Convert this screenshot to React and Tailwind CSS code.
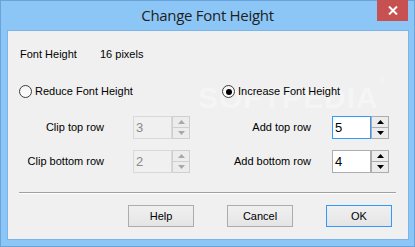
import React from "react";

function Arrow({ up, disabled }) {
  return (
    <svg width="7" height="4" viewBox="0 0 7 4" className="block">
      <path
        d={up ? "M0 4 L3.5 0 L7 4 Z" : "M0 0 L3.5 4 L7 0 Z"}
        fill={disabled ? "#a8a8a8" : "#000"}
      />
    </svg>
  );
}

function Spin({ value, disabled, focused }) {
  const boxBorder = focused
    ? "border-[#3399ff]"
    : disabled
    ? "border-[#d9d9d9]"
    : "border-[#abadb3]";
  const boxFill = disabled ? "bg-[#f0f0f0] text-[#8a8a8a]" : "bg-white text-black";
  const spinBorder = disabled ? "border-[#cfcfcf]" : "border-[#acacac]";

  return (
    <div className="flex h-[23px] w-[57px]">
      <div className={`flex flex-1 items-center border pl-[2px] text-[13px] ${boxBorder} ${boxFill}`}>
        {value}
      </div>
      <div className={`flex w-[18px] flex-col border ${spinBorder} bg-[#f0f0f0]`}>
        <div className={`flex flex-1 items-center justify-center border-b ${spinBorder} bg-[#ececec]`}>
          <Arrow up disabled={disabled} />
        </div>
        <div className="flex flex-1 items-center justify-center bg-[#ececec]">
          <Arrow disabled={disabled} />
        </div>
      </div>
    </div>
  );
}

function Radio({ checked, label }) {
  return (
    <div className="flex h-[13px] items-center">
      <span className="flex h-[13px] w-[13px] items-center justify-center rounded-full border border-[#3c3c3c] bg-gradient-to-b from-[#f4f4f4] to-white">
        {checked && <span className="h-[6px] w-[6px] rounded-full bg-black" />}
      </span>
      <span className="ml-[3px]">{label}</span>
    </div>
  );
}

function Row({ label, labelWidth, gap, children }) {
  return (
    <div className="flex h-[23px] items-center">
      <div className={`text-right ${labelWidth} ${gap}`}>{label}</div>
      {children}
    </div>
  );
}

function Button({ label, primary }) {
  return (
    <button
      className={`h-[22px] w-[66px] border bg-gradient-to-b from-[#f0f0f0] to-[#e5e5e5] text-[11px] text-black ${
        primary ? "border-[#3399ff]" : "border-[#acacac]"
      }`}
    >
      {label}
    </button>
  );
}

export default function App() {
  return (
    <div className="flex h-[247px] w-[415px] flex-col border border-[#6aa3da] bg-[#8cc6f6] font-['Liberation_Sans',Arial,sans-serif] text-[11px] text-black">
      <div className="relative flex h-[29px] items-center justify-center">
        <span className="font-['Open_Sans',sans-serif] text-[15px] text-[#1e1e1e] tracking-[-0.3px]">
          Change Font Height
        </span>
        <div className="absolute right-[6px] top-[-1px] flex h-[21px] w-[31px] items-center justify-center bg-[#c75050]">
          <svg width="10" height="9" viewBox="0 0 10 9">
            <path d="M1 0.5 L9 8.5 M9 0.5 L1 8.5" stroke="#fff" strokeWidth="2" />
          </svg>
        </div>
      </div>

      <div className="flex flex-1 pb-[6px] pl-[6px] pr-[5px]">
        <div className="relative flex flex-1 flex-col border border-[#7db4e8] bg-[#f0f0f0]">
          <div className="pointer-events-none absolute left-[190px] top-[44px] select-none font-['Liberation_Sans',sans-serif] text-[30px] font-bold tracking-[1px] text-[#f5f5f5]">
            SOFTPEDIA<span className="align-top text-[9px]">®</span>
          </div>

          <div className="relative flex flex-col pl-[11px]">
            <div className="mt-[17px] flex h-[13px] items-center pl-[1px]">
              <span className="w-[80px]">Font Height</span>
              <span>16 pixels</span>
            </div>

            <div className="mt-[24px] flex">
              <div className="flex w-[203px] flex-col">
                <Radio label="Reduce Font Height" />
                <div className="mt-[18px] flex flex-col gap-[11px]">
                  <Row label="Clip top row" labelWidth="w-[85px]" gap="mr-[29px]">
                    <Spin value="3" disabled />
                  </Row>
                  <Row label="Clip bottom row" labelWidth="w-[85px]" gap="mr-[29px]">
                    <Spin value="2" disabled />
                  </Row>
                </div>
              </div>
              <div className="flex flex-col">
                <Radio checked label="Increase Font Height" />
                <div className="mt-[18px] flex flex-col gap-[11px]">
                  <Row label="Add top row" labelWidth="w-[89px]" gap="mr-[21px]">
                    <Spin value="5" focused />
                  </Row>
                  <Row label="Add bottom row" labelWidth="w-[89px]" gap="mr-[21px]">
                    <Spin value="4" />
                  </Row>
                </div>
              </div>
            </div>
          </div>

          <div className="ml-[11px] mr-[12px] mt-[19px] border-b border-t border-b-white border-t-[#a0a0a0]" />

          <div className="mt-[11px] flex justify-end gap-[33px] pr-[16px]">
            <Button label="Help" />
            <Button label="Cancel" />
            <Button label="OK" primary />
          </div>
        </div>
      </div>
    </div>
  );
}
